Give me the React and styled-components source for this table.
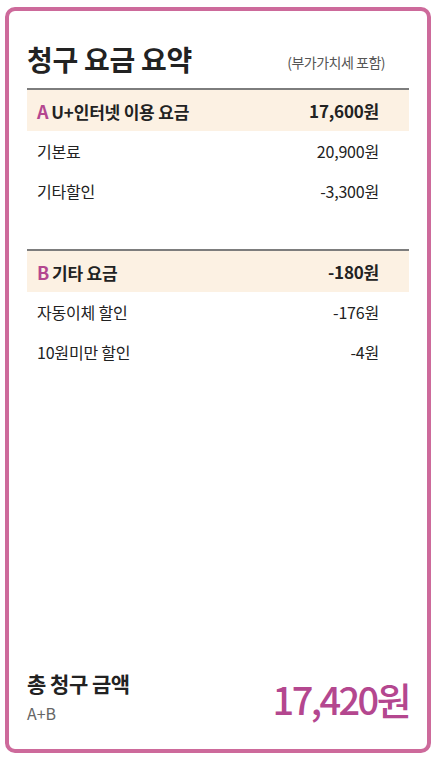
import React from 'react';
import styled, {createGlobalStyle} from 'styled-components';

const Global = createGlobalStyle`
    html, body {
        margin:0;
        padding:0;
        background:#fff;
    }
    body {
        font-family:"Noto Sans CJK KR", "Noto Sans", sans-serif;
        color:#222;
    }
`;

const Card = styled.div`
    box-sizing:border-box;
    margin:7px 0 0 5px;
    width:426px;
    height:746px;
    border:4px solid #cd6a9b;
    border-radius:10px;
    padding:0 18px 23px;
    display:flex;
    flex-direction:column;
`;

const Header = styled.div`
    display:flex;
    align-items:center;
    justify-content:space-between;
    padding:29px 0 10px;
`;

const Title = styled.h1`
    margin:0;
    font-size:28px;
    line-height:38px;
    font-weight:700;
    letter-spacing:-0.3px;
`;

const Note = styled.span`
    font-size:14px;
    color:#555;
    margin:6px 24px 0 0;
    letter-spacing:-0.5px;
`;

const Section = styled.div`
    border-top:2px solid #7d7d7d;
    margin-top:${p => p.gap || 0}px;
`;

const Row = styled.div`
    display:flex;
    justify-content:space-between;
    align-items:center;
    height:${p => p.head ? 41 : 40}px;
    padding:0 30px 0 10px;
    font-size:${p => p.head ? 17 : 16}px;
    font-weight:${p => p.head ? 700 : 400};
    background:${p => p.head ? '#fcf1e3' : 'transparent'};
    letter-spacing:-0.2px;
`;

const Mark = styled.span`
    color:#b4478f;
    font-size:18px;
    margin-right:3px;
`;

const Spacer = styled.div`
    flex:1;
`;

const Footer = styled.div`
    display:flex;
    justify-content:space-between;
    align-items:center;
`;

const TotalLabel = styled.div`
    font-size:21px;
    font-weight:700;
    line-height:28px;
    letter-spacing:-0.5px;
`;

const Formula = styled.div`
    font-size:16px;
    color:#666;
    line-height:24px;
    margin-top:4px;
`;

const Total = styled.div`
    font-size:38px;
    font-weight:500;
    color:#b4478f;
    letter-spacing:-2.6px;
    margin-top:4px;
`;

const groups = [
    {
        mark: 'A', title: 'U+인터넷 이용 요금', amount: '17,600원',
        items: [['기본료', '20,900원'], ['기타할인', '-3,300원']],
    },
    {
        mark: 'B', title: '기타 요금', amount: '-180원',
        items: [['자동이체 할인', '-176원'], ['10원미만 할인', '-4원']],
    },
];

export default function App() {
    return (
        <>
            <Global/>
            <Card>
                <Header>
                    <Title>청구 요금 요약</Title>
                    <Note>(부가가치세 포함)</Note>
                </Header>
                {groups.map((g, i) => (
                    <Section key={g.mark} gap={i ? 38 : 0}>
                        <Row head>
                            <span><Mark>{g.mark}</Mark>{g.title}</span>
                            <span>{g.amount}</span>
                        </Row>
                        {g.items.map(([name, value]) => (
                            <Row key={name}>
                                <span>{name}</span>
                                <span>{value}</span>
                            </Row>
                        ))}
                    </Section>
                ))}
                <Spacer/>
                <Footer>
                    <div>
                        <TotalLabel>총 청구 금액</TotalLabel>
                        <Formula>A+B</Formula>
                    </div>
                    <Total>17,420원</Total>
                </Footer>
            </Card>
        </>
    );
}
